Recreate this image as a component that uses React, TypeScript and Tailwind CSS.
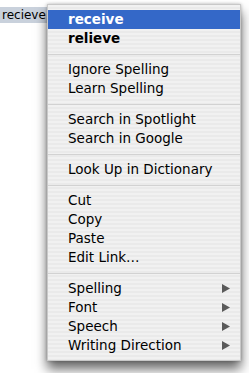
import React from 'react'

type Entry =
  | { kind: 'item'; label: string; bold?: boolean; active?: boolean; submenu?: boolean }
  | { kind: 'sep' }

const entries: Entry[] = [
  { kind: 'item', label: 'receive', bold: true, active: true },
  { kind: 'item', label: 'relieve', bold: true },
  { kind: 'sep' },
  { kind: 'item', label: 'Ignore Spelling' },
  { kind: 'item', label: 'Learn Spelling' },
  { kind: 'sep' },
  { kind: 'item', label: 'Search in Spotlight' },
  { kind: 'item', label: 'Search in Google' },
  { kind: 'sep' },
  { kind: 'item', label: 'Look Up in Dictionary' },
  { kind: 'sep' },
  { kind: 'item', label: 'Cut' },
  { kind: 'item', label: 'Copy' },
  { kind: 'item', label: 'Paste' },
  { kind: 'item', label: 'Edit Link…' },
  { kind: 'sep' },
  { kind: 'item', label: 'Spelling', submenu: true },
  { kind: 'item', label: 'Font', submenu: true },
  { kind: 'item', label: 'Speech', submenu: true },
  { kind: 'item', label: 'Writing Direction', submenu: true },
]

const Arrow = () => (
  <svg width="8" height="9" viewBox="0 0 8 9" className="shrink-0">
    <polygon points="0,0 8,4.5 0,9" fill="#5a5a5a" />
  </svg>
)

export default function App() {
  return (
    <div className="relative w-[249px] h-[373px] bg-white overflow-hidden font-['DejaVu_Sans',sans-serif]">
      {/* misspelled word with selection */}
      <div className="pt-[2px]">
        <span className="inline-block bg-[#c9d1dc] h-[16px] pl-[2px] pr-[3px] text-[12px] leading-[16px] text-black">
          recieve
        </span>
      </div>

      {/* context menu */}
      <div className="absolute left-[47px] top-[4px] w-[194px] py-[5px] border border-[#c8c8c8] bg-[repeating-linear-gradient(to_bottom,#f1f1f1_0px,#f1f1f1_2px,#eaeaea_2px,#eaeaea_4px)] shadow-[0_8px_11px_rgba(0,0,0,0.6),0_0_3px_rgba(0,0,0,0.25)]">
        {entries.map((e, i) =>
          e.kind === 'sep' ? (
            <div key={i} className="h-[12px] flex items-center">
              <div className="h-px w-full bg-[#d2d2d2]" />
            </div>
          ) : (
            <div
              key={i}
              className={`h-[19px] flex items-center pl-[20px] pr-[10px] text-[13.5px] leading-[19px] ${
                e.active ? 'bg-[#3468c8] text-white' : 'text-black'
              } ${e.bold ? 'font-bold' : 'font-normal'}`}
            >
              <span className="flex-1 whitespace-nowrap">{e.label}</span>
              {e.submenu && <Arrow />}
            </div>
          )
        )}
      </div>
    </div>
  )
}
